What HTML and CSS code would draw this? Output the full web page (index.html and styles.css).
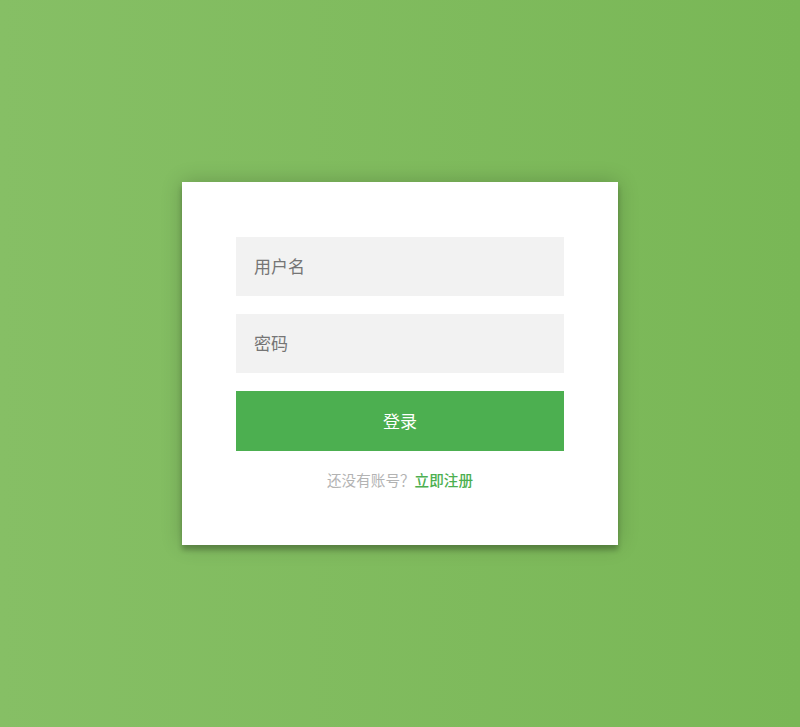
FILE: index.html
```html
<!DOCTYPE html>
<html lang="zh-CN">
<head>
<meta charset="utf-8">
<title>登录</title>
<link rel="stylesheet" href="styles.css">
</head>
<body>
<div class="page">
  <form class="form">
    <input class="field" type="text" placeholder="用户名">
    <input class="field" type="password" placeholder="密码">
    <button class="submit" type="button">登录</button>
    <p class="message">还没有账号？<a href="#">立即注册</a></p>
  </form>
</div>
</body>
</html>
```
FILE: styles.css
```css
html, body {
  margin: 0;
  padding: 0;
  height: 100%;
}
body {
  background: linear-gradient(to left, #79b756, #86bf65);
  font-family: "Noto Sans CJK SC", "Noto Sans", sans-serif;
}
.page {
  height: 100%;
  display: flex;
  align-items: center;
  justify-content: center;
}
.form {
  box-sizing: border-box;
  width: 436px;
  padding: 55px 54px 55px;
  background: #ffffff;
  box-shadow: 0 0 20px rgba(0, 0, 0, 0.2), 0 5px 5px rgba(0, 0, 0, 0.24);
  display: flex;
  flex-direction: column;
  margin: 0;
}
.field {
  box-sizing: border-box;
  width: 100%;
  height: 59px;
  margin: 0 0 18px;
  padding: 0 18px 2px;
  border: 0;
  outline: 0;
  background: #f2f2f2;
  font-family: inherit;
  font-size: 17px;
  color: #333;
}
.field::placeholder {
  color: #757575;
}
.submit {
  box-sizing: border-box;
  width: 100%;
  height: 60px;
  border: 0;
  background: #4caf50;
  color: #ffffff;
  font-family: inherit;
  font-size: 17px;
  cursor: pointer;
  padding: 0 0 2px;
}
.message {
  margin: 19px 0 0;
  text-align: center;
  color: #b3b3b3;
  font-size: 14.6px;
  line-height: 20px;
}
.message a {
  color: #4caf50;
  font-weight: 500;
  text-decoration: none;
}
```
